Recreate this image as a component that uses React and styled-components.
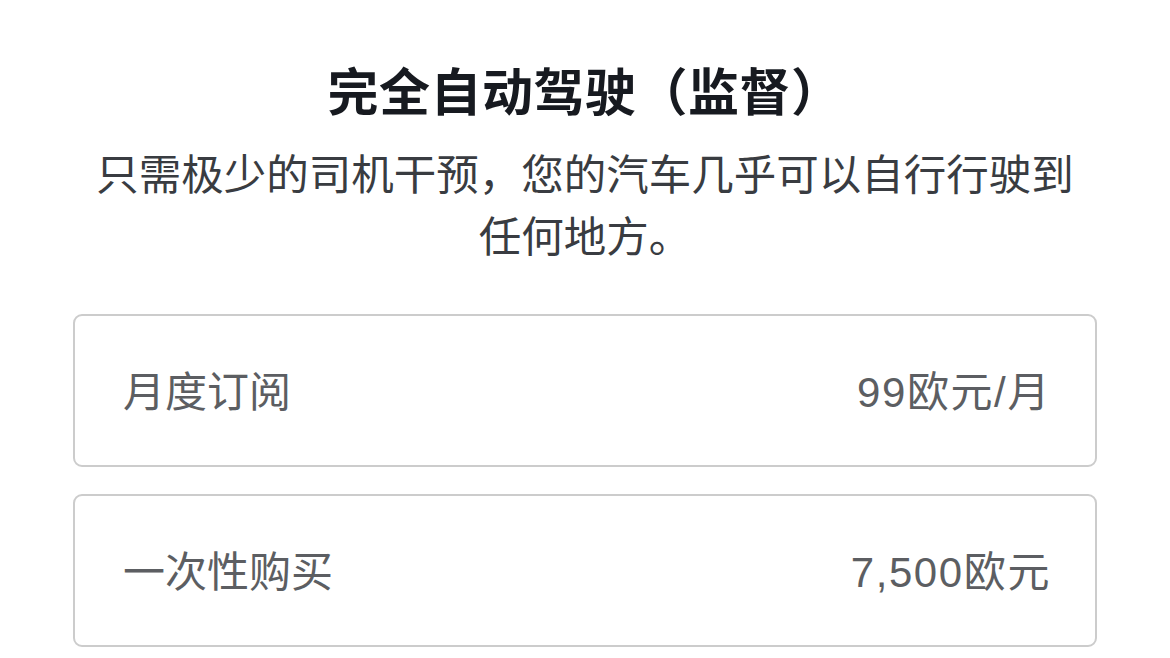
import React from 'react'
import styled, { createGlobalStyle } from 'styled-components'

const GlobalStyle = createGlobalStyle`
  html, body {
    margin: 0;
    padding: 0;
    background: #ffffff;
  }
  body {
    font-family: "Liberation Sans", "Noto Sans CJK SC", sans-serif;
    -webkit-font-smoothing: antialiased;
  }
`

const Page = styled.main`
  width: 1024px;
  margin: 0 auto;
  padding-top: 59px;
  display: flex;
  flex-direction: column;
  align-items: center;
`

const Title = styled.h1`
  margin: 0;
  font-family: "Noto Sans CJK SC", sans-serif;
  font-size: 51px;
  font-weight: 600;
  letter-spacing: 0.5px;
  line-height: 60px;
  color: #171a20;
  text-align: center;
`

const Subtitle = styled.p`
  margin: 22px 0 0;
  max-width: 1000px;
  font-family: "Noto Sans CJK SC", sans-serif;
  font-size: 42.5px;
  font-weight: 400;
  line-height: 62px;
  color: #393c41;
  text-align: center;
`

const Options = styled.div`
  width: 100%;
  margin-top: 49px;
  display: flex;
  flex-direction: column;
  gap: 27px;
`

const Option = styled.div`
  box-sizing: border-box;
  height: 153px;
  padding: 0 44px 5px 48px;
  display: flex;
  align-items: center;
  justify-content: space-between;
  border: 2px solid #cccccc;
  border-radius: 9px;
  font-size: 42px;
  color: #5c5e62;
`

const Label = styled.span`
  font-family: "Noto Sans CJK SC", sans-serif;
`

const Price = styled.span`
  font-family: "Liberation Sans", "Noto Sans CJK SC", sans-serif;
  letter-spacing: 1.6px;
`

const plans = [
  { label: '月度订阅', price: '99欧元/月' },
  { label: '一次性购买', price: '7,500欧元' },
]

export default function App() {
  return (
    <>
      <GlobalStyle />
      <Page>
        <Title>完全自动驾驶（监督）</Title>
        <Subtitle>只需极少的司机干预，您的汽车几乎可以自行行驶到任何地方。</Subtitle>
        <Options>
          {plans.map(p => (
            <Option key={p.label}>
              <Label>{p.label}</Label>
              <Price>{p.price}</Price>
            </Option>
          ))}
        </Options>
      </Page>
    </>
  )
}
